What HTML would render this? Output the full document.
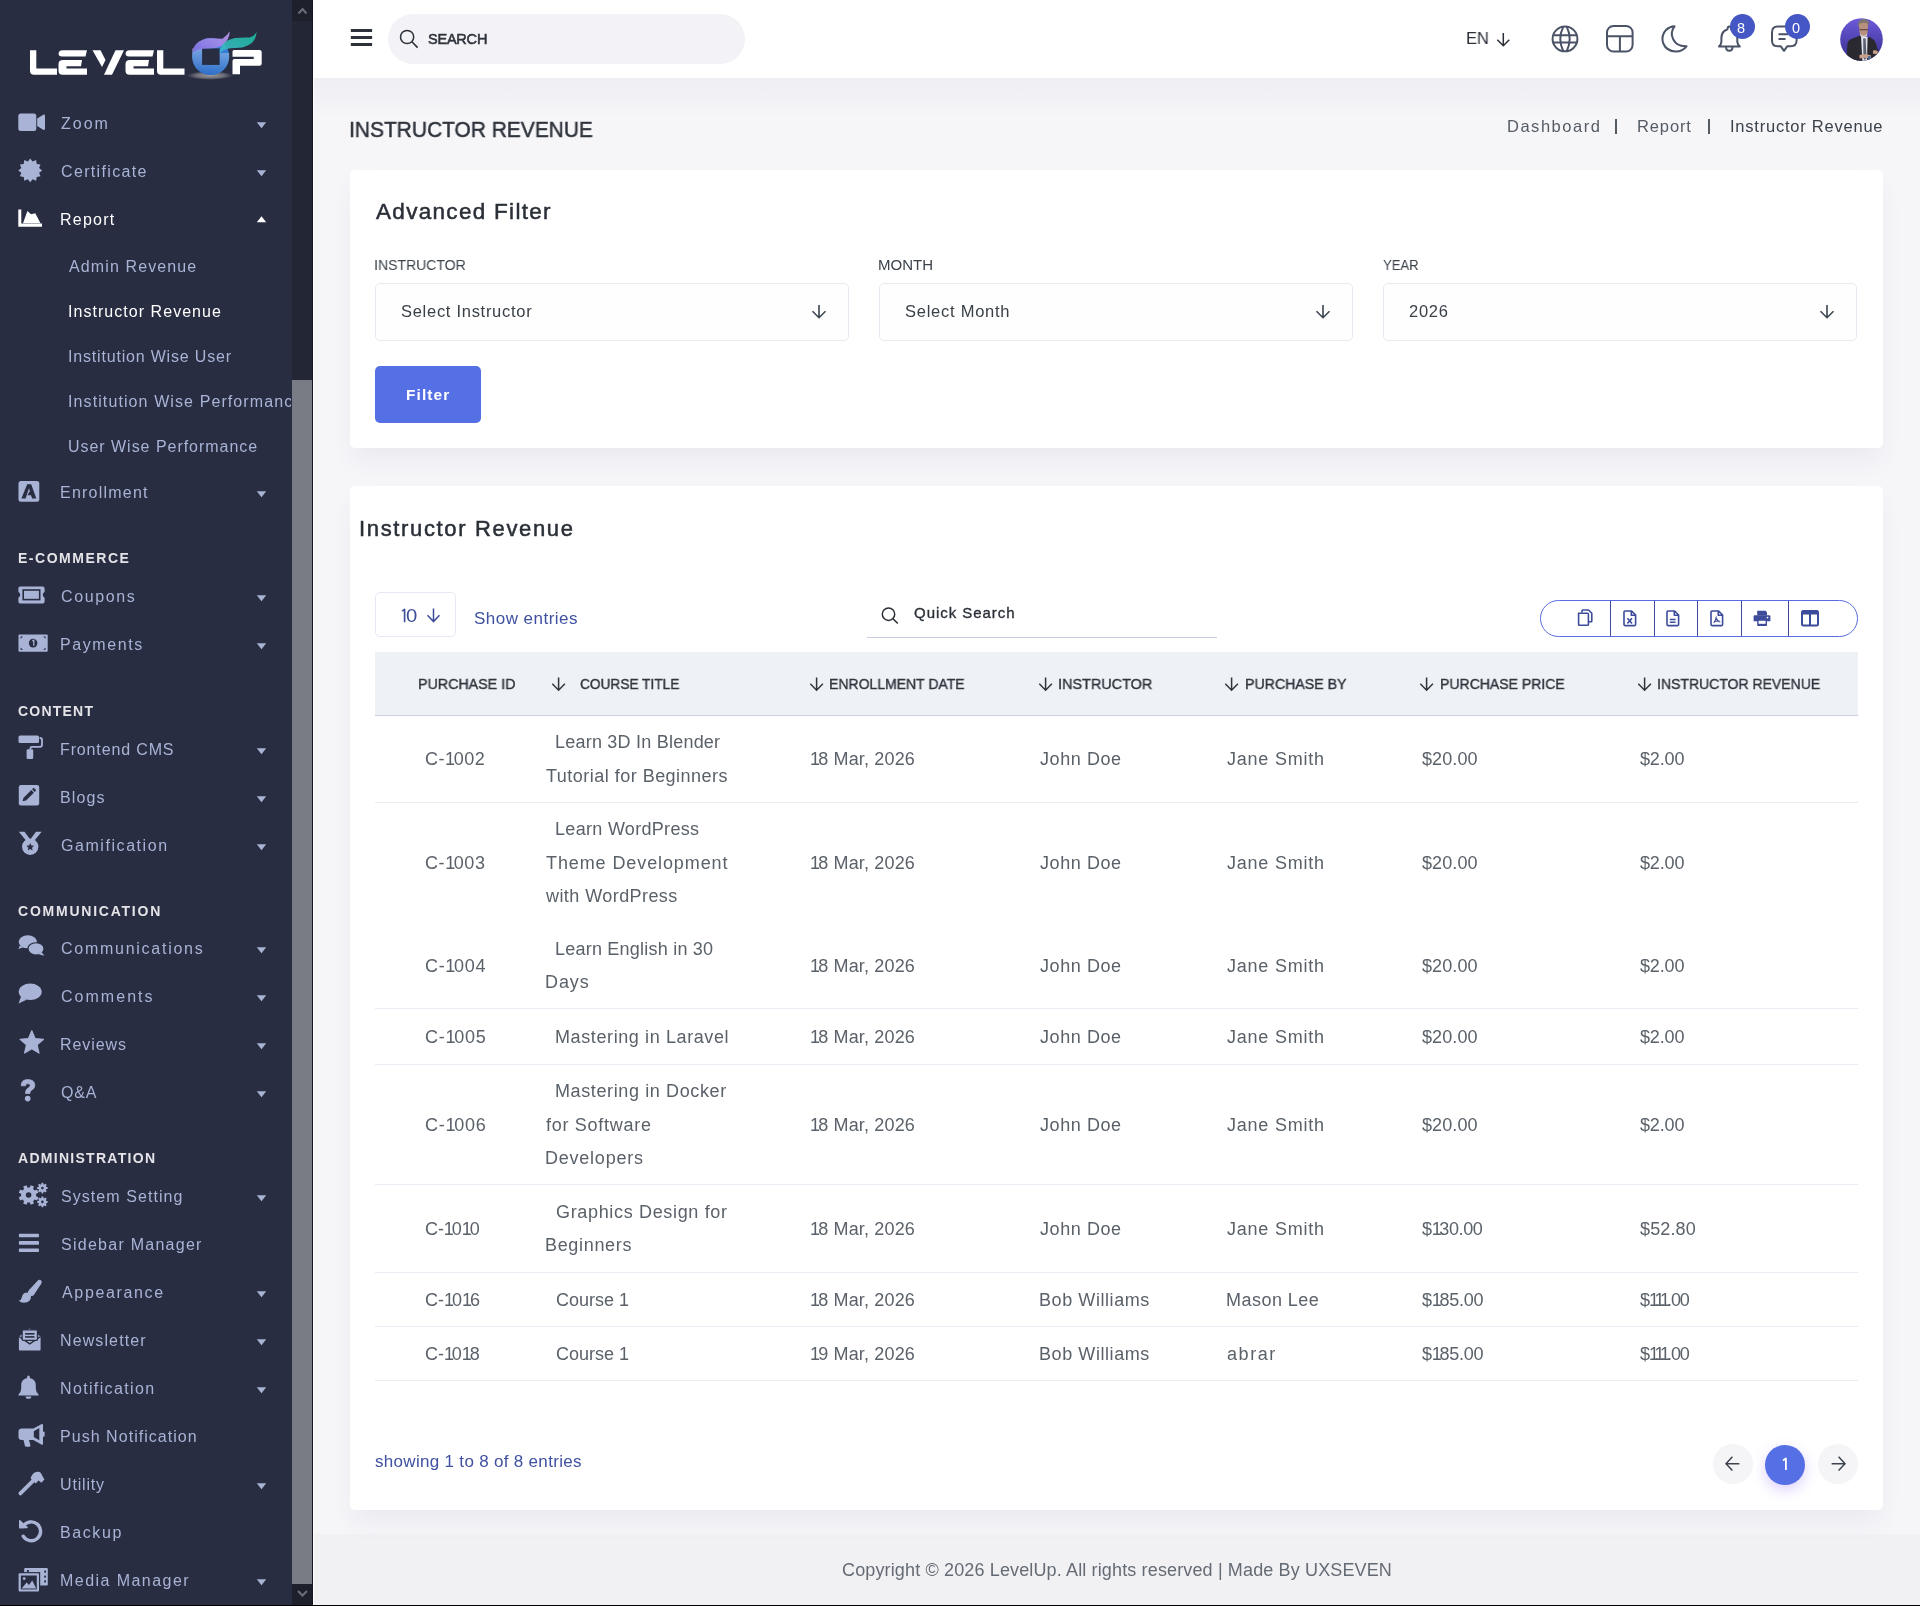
<!DOCTYPE html><html><head><meta charset="utf-8"><style>
html,body{margin:0;padding:0;width:1920px;height:1606px;overflow:hidden;background:#f6f6f9}
body{position:relative;font-family:"Liberation Sans",sans-serif}
.a{position:absolute}
.t{position:absolute;white-space:nowrap;will-change:transform}
.card{background:#fff;border-radius:5px;box-shadow:0 14px 24px -4px rgba(80,80,130,0.08)}
svg{overflow:visible}
</style></head><body>
<div class="a" style="left:0;top:0;width:292px;height:1606px;background:#292d41"></div>
<div class="a" style="left:292px;top:0;width:21px;height:1606px;background:#232634"></div>
<div class="a" style="left:292px;top:0;width:21px;height:21px;background:#1e202b"></div>
<div class="a" style="left:292px;top:1584px;width:21px;height:21px;background:#1e202b"></div>
<div class="a" style="left:292px;top:380px;width:21px;height:1204px;background:#7a7c85"></div>
<div class="a" style="left:312px;top:0;width:1px;height:1606px;background:#141722"></div>
<svg class="a" style="left:292px;top:0" width="21" height="21"><path d="M6.5 13.5 L10.5 9 L14.5 13.5" stroke="#6b6e78" stroke-width="2" fill="none"/></svg>
<svg class="a" style="left:292px;top:1584px" width="21" height="21"><path d="M6 7 L10.5 11.5 L15 7" stroke="#6b6e78" stroke-width="2" fill="none"/></svg>
<div class="a" style="left:313px;top:0;width:1px;height:1606px;background:#ffffff"></div>
<div class="a" style="left:314px;top:78px;width:1606px;height:1528px;background:#f6f6f9"></div>
<div class="a" style="left:314px;top:78px;width:1606px;height:40px;background:linear-gradient(#eeeef3,#f6f6f9)"></div>
<div class="a" style="left:314px;top:0;width:1606px;height:78px;background:#fff"></div>
<div class="a" style="left:388px;top:14px;width:357px;height:50px;border-radius:25px;background:#f2f2f7"></div>
<div class="a" style="left:314px;top:1534px;width:1606px;height:72px;background:#f1f1f4"></div>
<div class="a card" style="left:350px;top:170px;width:1533px;height:278px"></div>
<div class="a card" style="left:350px;top:486px;width:1533px;height:1024px"></div>
<div class="a" style="left:0;top:1605px;width:1920px;height:1px;background:#000"></div>
<svg class="a" style="left:0;top:0" width="292" height="90">
<defs>
<linearGradient id="gU" x1="0" y1="0" x2="1" y2="1"><stop offset="0" stop-color="#2f6fd0"/><stop offset="1" stop-color="#3a86d8"/></linearGradient>
<linearGradient id="gP" x1="0" y1="1" x2="1" y2="0"><stop offset="0" stop-color="#7a6ee0"/><stop offset="1" stop-color="#c29ef0"/></linearGradient>
<linearGradient id="gT" x1="0" y1="1" x2="1" y2="0"><stop offset="0" stop-color="#3fb8c8"/><stop offset="1" stop-color="#19b89a"/></linearGradient>
<linearGradient id="gU2" x1="0" y1="0" x2="0" y2="1"><stop offset="0" stop-color="#ffffff"/><stop offset="1" stop-color="#1a4fb0"/></linearGradient><radialGradient id="gS"><stop offset="0" stop-color="#a09a96" stop-opacity="1"/><stop offset="0.6" stop-color="#80808a" stop-opacity="0.8"/><stop offset="1" stop-color="#6a6c78" stop-opacity="0"/></radialGradient>
</defs>
<ellipse cx="210" cy="75.5" rx="23.5" ry="4.4" fill="url(#gS)"/>
<path d="M30 50.2 H36.3 V68.5 H57 V74.8 H34 Q30 74.8 30 70.8 Z" fill="#ffffff"/>
<path d="M62.5 50.2 H87 L85.5 56.5 H62 Q58.4 56.5 58.6 53.5 Q59 50.2 62.5 50.2 Z" fill="#ffffff"/>
<path d="M63 60 H82 L81 66.3 H66.5 V68.5 H87 V74.8 H62.5 Q58.5 74.8 58.5 70.8 V64 Q58.5 60 63 60 Z" fill="#ffffff"/>
<path d="M92.5 50.2 H100.5 L105.5 60 L102 67 Z" fill="#ffffff"/>
<path d="M115.5 50.2 H124 L112 74.8 H104 Z" fill="#ffffff"/>
<path d="M129.5 50.2 H154 L152.5 56.5 H129 Q125.4 56.5 125.6 53.5 Q126 50.2 129.5 50.2 Z" fill="#ffffff"/>
<path d="M130 60 H149 L148 66.3 H133.5 V68.5 H154 V74.8 H129.5 Q125.5 74.8 125.5 70.8 V64 Q125.5 60 130 60 Z" fill="#ffffff"/>
<path d="M157 50.2 H163.3 V68.5 H184.5 V74.8 H161 Q157 74.8 157 70.8 Z" fill="#ffffff"/>
<path d="M234 50 H259.5 Q261.7 50 261.7 52.2 V63.5 Q261.7 65.7 259.5 65.7 H240 V74.25 H232.5 V61 Q232.5 59 234.5 59 H253.75 V56.75 H232.5 V51.5 Q232.5 50 234 50 Z" fill="#ffffff"/>
<circle cx="210.65" cy="56.55" r="18.55" fill="url(#gU)"/>
<path d="M192.1 56.5 A18.55 18.55 0 0 0 229.2 56.5 L229.2 53 L219.6 53 V64.9 H202.1 V48.4 H192.1 Z" fill="url(#gU2)" opacity="0.35"/>
<rect x="202.1" y="48.4" width="17.5" height="16.5" fill="#292d41"/>
<path d="M192.2 53 Q193.5 41 208 38.3 Q216 37.8 222.5 38.8 Q227 36 229.8 31.3 Q229.5 40 222.5 45.5 Q218 48.4 208 48.4 Q197 48.6 192.2 53 Z" fill="url(#gP)" opacity="0.92"/>
<path d="M219.6 53 Q220.5 41 235 38 Q243 37.2 249.6 37.6 Q254.5 36 256.7 31.75 Q256 42 247.5 45.5 Q243 48 235 48 Q224.6 48 219.6 53 Z" fill="url(#gT)" opacity="0.92"/>
</svg>
<svg class="a" style="left:18px;top:113px" width="28" height="19"><rect x="0.3" y="0.5" width="18" height="17.5" rx="2.5" fill="#a8b3d5"/><path d="M19.2 5.5 L25.2 1.8 Q27 1 27 3 V15.5 Q27 17.5 25.2 16.7 L19.2 13 Z" fill="#a8b3d5"/></svg>
<svg class="a" style="left:18px;top:158px" width="25" height="25"><polygon points="12.20,0.50 14.58,3.51 18.15,2.09 18.71,5.89 22.51,6.45 21.09,10.02 24.10,12.40 21.09,14.78 22.51,18.35 18.71,18.91 18.15,22.71 14.58,21.29 12.20,24.30 9.82,21.29 6.25,22.71 5.69,18.91 1.89,18.35 3.31,14.78 0.30,12.40 3.31,10.02 1.89,6.45 5.69,5.89 6.25,2.09 9.82,3.51" fill="#a8b3d5"/></svg>
<svg class="a" style="left:18px;top:209px" width="25" height="18"><path d="M0.3 0.4 H3.3 V14.5 H24 V17.8 H0.3 Z" fill="#fff"/><path d="M5 14.3 L9.4 2.1 L13 5.2 L17.3 4.3 L22.5 14.3 Z" fill="#fff"/></svg>
<svg class="a" style="left:18px;top:481px" width="22" height="21"><rect x="0.5" y="0" width="20.8" height="20.8" rx="2.5" fill="#a8b3d5"/><path d="M3.4 17.5 L9.2 3.3 H13.2 L18.3 17.5 H14.1 L13 14.3 H9.6 L11.3 10.8 H12 L11 7.3 L7.6 17.5 Z" fill="#292d41"/></svg>
<svg class="a" style="left:18px;top:586px" width="28" height="18"><path d="M2 0.4 H24.6 Q26.6 0.4 26.6 2.4 V6 Q24.8 6.4 24.8 8.8 Q24.8 11.2 26.6 11.6 V15.5 Q26.6 17.5 24.6 17.5 H2 Q0.4 17.5 0.4 15.5 V11.6 Q2.2 11.2 2.2 8.8 Q2.2 6.4 0.4 6 V2.4 Q0.4 0.4 2 0.4 Z" fill="#a8b3d5"/><rect x="5.2" y="4" width="16.5" height="9.6" fill="none" stroke="#292d41" stroke-width="1.6"/></svg>
<svg class="a" style="left:18px;top:634px" width="30" height="18"><rect x="0.5" y="0.4" width="29.2" height="17.4" rx="1" fill="#a8b3d5"/><circle cx="15.1" cy="9.1" r="4.3" fill="#292d41"/><path d="M14.3 6.9 L15.8 6.2 V11.8" stroke="#a8b3d5" stroke-width="1.3" fill="none"/><path d="M2.6 2.4 L5 2.4 L2.6 4.8 Z M27.6 2.4 L25.2 2.4 L27.6 4.8 Z M2.6 15.8 L5 15.8 L2.6 13.4 Z M27.6 15.8 L25.2 15.8 L27.6 13.4 Z" fill="#292d41"/></svg>
<svg class="a" style="left:18px;top:735px" width="25" height="25"><rect x="0.5" y="0.4" width="20.5" height="7.6" rx="1.6" fill="#a8b3d5"/><path d="M21.6 3 H22 Q24 3 24 5 V9.8 Q24 11.8 22 11.8 H14 Q12.4 11.8 12.4 13.4 V14.5" stroke="#a8b3d5" stroke-width="1.8" fill="none"/><rect x="8.6" y="14.3" width="6.6" height="9.7" rx="1.2" fill="#a8b3d5"/></svg>
<svg class="a" style="left:18px;top:785px" width="22" height="21"><rect x="0.8" y="0" width="20.4" height="20.5" rx="2.2" fill="#a8b3d5"/><path d="M4.6 16.2 L5.4 13 L13.3 5.1 L15.9 7.7 L8 15.6 Z M14.1 4.3 L15.1 3.3 Q15.7 2.7 16.3 3.3 L17.7 4.7 Q18.3 5.3 17.7 5.9 L16.7 6.9 Z" fill="#292d41"/></svg>
<svg class="a" style="left:18px;top:831px" width="25" height="25"><path d="M0.8 0.8 H6.5 L11.5 7.5 L9 10.8 Z M23.7 0.8 H18 L13 7.5 L15.5 10.8 Z" fill="#a8b3d5"/><circle cx="12.2" cy="15.7" r="8.2" fill="#a8b3d5"/><polygon points="12.20,12.00 13.32,14.56 16.10,14.83 14.01,16.69 14.61,19.42 12.20,18.00 9.79,19.42 10.39,16.69 8.30,14.83 11.08,14.56" fill="#292d41"/></svg>
<svg class="a" style="left:18px;top:935px" width="28" height="22"><ellipse cx="9.8" cy="6.8" rx="9.2" ry="6.5" fill="#a8b3d5"/><path d="M1.8 10.5 L0.4 14 L5.5 12.3 Z" fill="#a8b3d5"/><ellipse cx="17.8" cy="13.2" rx="8.4" ry="6" fill="#292d41"/><ellipse cx="18" cy="13.8" rx="7.4" ry="5.6" fill="#a8b3d5"/><path d="M23.5 17 L26.4 20.8 L20.5 19.3 Z" fill="#a8b3d5"/></svg>
<svg class="a" style="left:18px;top:983px" width="25" height="22"><ellipse cx="12.2" cy="8.8" rx="11.5" ry="8.3" fill="#a8b3d5"/><path d="M3 13.5 L0.6 20.5 L8.5 16.8 Z" fill="#a8b3d5"/></svg>
<svg class="a" style="left:18px;top:1029px" width="27" height="26"><polygon points="13.80,1.80 17.09,9.57 25.50,10.30 19.13,15.83 21.03,24.05 13.80,19.70 6.57,24.05 8.47,15.83 2.10,10.30 10.51,9.57" fill="#a8b3d5" stroke="#a8b3d5" stroke-width="1.2" stroke-linejoin="round"/></svg>
<svg class="a" style="left:18px;top:1078px" width="20" height="25"><path d="M3.2 7.8 Q3.2 1.6 9.8 1.6 Q16.8 1.6 16.8 7.6 Q16.8 10.5 13.6 12.3 Q11.9 13.3 11.9 15 V15.5 H7.5 V14.5 Q7.5 11.4 10.4 9.8 Q12.3 8.8 12.3 7.6 Q12.3 5.6 9.8 5.6 Q7.5 5.6 7.5 7.8 Z" fill="#a8b3d5" stroke="#a8b3d5" stroke-width="0.8"/><circle cx="9.7" cy="20.6" r="2.8" fill="#a8b3d5"/></svg>
<svg class="a" style="left:18px;top:1183px" width="32" height="26"><circle cx="10.6" cy="12" r="7.6" fill="#a8b3d5"/><rect x="8.799999999999999" y="2.0999999999999996" width="3.6" height="9.9" rx="0.6" fill="#a8b3d5" transform="rotate(22.5 10.6 12)"/><rect x="8.799999999999999" y="2.0999999999999996" width="3.6" height="9.9" rx="0.6" fill="#a8b3d5" transform="rotate(67.5 10.6 12)"/><rect x="8.799999999999999" y="2.0999999999999996" width="3.6" height="9.9" rx="0.6" fill="#a8b3d5" transform="rotate(112.5 10.6 12)"/><rect x="8.799999999999999" y="2.0999999999999996" width="3.6" height="9.9" rx="0.6" fill="#a8b3d5" transform="rotate(157.5 10.6 12)"/><rect x="8.799999999999999" y="2.0999999999999996" width="3.6" height="9.9" rx="0.6" fill="#a8b3d5" transform="rotate(202.5 10.6 12)"/><rect x="8.799999999999999" y="2.0999999999999996" width="3.6" height="9.9" rx="0.6" fill="#a8b3d5" transform="rotate(247.5 10.6 12)"/><rect x="8.799999999999999" y="2.0999999999999996" width="3.6" height="9.9" rx="0.6" fill="#a8b3d5" transform="rotate(292.5 10.6 12)"/><rect x="8.799999999999999" y="2.0999999999999996" width="3.6" height="9.9" rx="0.6" fill="#a8b3d5" transform="rotate(337.5 10.6 12)"/><circle cx="10.6" cy="12" r="2.8" fill="#292d41"/><circle cx="24.4" cy="5.1" r="3.9" fill="#a8b3d5"/><rect x="23.4" y="-0.20000000000000018" width="2.0" height="5.3" rx="0.6" fill="#a8b3d5" transform="rotate(0.0 24.4 5.1)"/><rect x="23.4" y="-0.20000000000000018" width="2.0" height="5.3" rx="0.6" fill="#a8b3d5" transform="rotate(45.0 24.4 5.1)"/><rect x="23.4" y="-0.20000000000000018" width="2.0" height="5.3" rx="0.6" fill="#a8b3d5" transform="rotate(90.0 24.4 5.1)"/><rect x="23.4" y="-0.20000000000000018" width="2.0" height="5.3" rx="0.6" fill="#a8b3d5" transform="rotate(135.0 24.4 5.1)"/><rect x="23.4" y="-0.20000000000000018" width="2.0" height="5.3" rx="0.6" fill="#a8b3d5" transform="rotate(180.0 24.4 5.1)"/><rect x="23.4" y="-0.20000000000000018" width="2.0" height="5.3" rx="0.6" fill="#a8b3d5" transform="rotate(225.0 24.4 5.1)"/><rect x="23.4" y="-0.20000000000000018" width="2.0" height="5.3" rx="0.6" fill="#a8b3d5" transform="rotate(270.0 24.4 5.1)"/><rect x="23.4" y="-0.20000000000000018" width="2.0" height="5.3" rx="0.6" fill="#a8b3d5" transform="rotate(315.0 24.4 5.1)"/><circle cx="24.4" cy="5.1" r="1.3" fill="#292d41"/><circle cx="24.4" cy="18.9" r="3.9" fill="#a8b3d5"/><rect x="23.4" y="13.599999999999998" width="2.0" height="5.3" rx="0.6" fill="#a8b3d5" transform="rotate(0.0 24.4 18.9)"/><rect x="23.4" y="13.599999999999998" width="2.0" height="5.3" rx="0.6" fill="#a8b3d5" transform="rotate(45.0 24.4 18.9)"/><rect x="23.4" y="13.599999999999998" width="2.0" height="5.3" rx="0.6" fill="#a8b3d5" transform="rotate(90.0 24.4 18.9)"/><rect x="23.4" y="13.599999999999998" width="2.0" height="5.3" rx="0.6" fill="#a8b3d5" transform="rotate(135.0 24.4 18.9)"/><rect x="23.4" y="13.599999999999998" width="2.0" height="5.3" rx="0.6" fill="#a8b3d5" transform="rotate(180.0 24.4 18.9)"/><rect x="23.4" y="13.599999999999998" width="2.0" height="5.3" rx="0.6" fill="#a8b3d5" transform="rotate(225.0 24.4 18.9)"/><rect x="23.4" y="13.599999999999998" width="2.0" height="5.3" rx="0.6" fill="#a8b3d5" transform="rotate(270.0 24.4 18.9)"/><rect x="23.4" y="13.599999999999998" width="2.0" height="5.3" rx="0.6" fill="#a8b3d5" transform="rotate(315.0 24.4 18.9)"/><circle cx="24.4" cy="18.9" r="1.3" fill="#292d41"/></svg>
<svg class="a" style="left:18px;top:1233px" width="22" height="20"><rect x="0.9" y="0.8" width="20.1" height="3.5" rx="0.8" fill="#a8b3d5"/><rect x="0.9" y="8" width="20.1" height="3.7" rx="0.8" fill="#a8b3d5"/><rect x="0.9" y="15.6" width="20.1" height="3.5" rx="0.8" fill="#a8b3d5"/></svg>
<svg class="a" style="left:18px;top:1279px" width="25" height="25"><path d="M22.6 1 Q24.6 2.4 23.4 4.6 L16 15.8 Q14.4 17.8 12.2 16.4 L10.6 15 Q9 13.4 10.6 11.6 L19.6 1.8 Q21 0.2 22.6 1 Z" fill="#a8b3d5"/><path d="M8.6 13.6 Q12.2 14.2 13 17.6 Q13 23.6 6 23.8 Q2.4 23.8 0.8 21.6 Q3.4 21.2 3.8 18.6 Q4.4 14 8.6 13.6 Z" fill="#a8b3d5"/></svg>
<svg class="a" style="left:18px;top:1327px" width="25" height="25"><path d="M0.9 9.5 L11.5 1.5 L22.6 9.5 V22.5 Q22.6 23.6 21.5 23.6 H2 Q0.9 23.6 0.9 22.5 Z" fill="#a8b3d5"/><path d="M0.9 9.5 L11.8 16.8 L22.6 9.5" fill="none" stroke="#292d41" stroke-width="1.4"/><rect x="4.1" y="2.8" width="15.4" height="10.5" rx="1" fill="#a8b3d5" stroke="#292d41" stroke-width="1.3"/><rect x="7.1" y="6" width="9.4" height="1.6" fill="#292d41"/><rect x="7.1" y="9.1" width="9.4" height="1.6" fill="#292d41"/></svg>
<svg class="a" style="left:18px;top:1375px" width="22" height="25"><path d="M10.4 0.5 Q11.8 0.5 11.8 2 V3 Q17.8 4.1 17.8 10.5 V13.8 Q17.8 16.6 20.6 19.4 V20.5 H0.5 V19.4 Q3.2 16.6 3.2 13.8 V10.5 Q3.2 4.1 9.1 3 V2 Q9.1 0.5 10.4 0.5 Z" fill="#a8b3d5"/><path d="M7.6 21.5 H13.3 Q13.3 23.8 10.4 23.8 Q7.6 23.8 7.6 21.5 Z" fill="#a8b3d5"/></svg>
<svg class="a" style="left:18px;top:1423px" width="28" height="25"><path d="M23.8 1 Q25 0.6 25 2 V20.8 Q25 22.2 23.8 21.7 L15.4 17 H11 L12.4 22.3 Q12.7 23.7 11.3 23.7 H8.2 Q7.2 23.7 6.9 22.7 L5.5 17 H3.8 Q0.5 17 0.5 13.8 V8.6 Q0.5 5.4 3.8 5.4 H15.4 Z M21.3 5 L15.8 8.3 V14 L21.3 17.3 Z" fill="#a8b3d5" fill-rule="evenodd"/><rect x="25" y="8.6" width="1.6" height="5.2" rx="0.7" fill="#a8b3d5"/></svg>
<svg class="a" style="left:18px;top:1471px" width="28" height="25"><path d="M12.6 7.4 Q14.5 1.2 19.5 0.8 Q22 0.6 23 2.2 L26.4 8.6 L23.4 11.8 L20.6 9.4 L17.6 12.4 Z" fill="#a8b3d5"/><path d="M2.4 22.4 L15 9.8" stroke="#a8b3d5" stroke-width="3.8" stroke-linecap="round"/></svg>
<svg class="a" style="left:18px;top:1519px" width="25" height="25"><path d="M5.2 7.4 A9.4 9.4 0 1 1 5.2 17.2" stroke="#a8b3d5" stroke-width="3.4" fill="none" stroke-linecap="round"/><path d="M1 1.8 Q1 0.4 2.3 1.3 L9.4 7.7 Q10.3 8.8 9 9.2 L2.2 9.6 Q1 9.6 1 8.4 Z" fill="#a8b3d5"/></svg>
<svg class="a" style="left:18px;top:1567px" width="31" height="26"><rect x="6.2" y="1" width="23.6" height="17.5" rx="1.2" fill="#a8b3d5"/><rect x="26.2" y="3.6" width="1.8" height="2" fill="#292d41"/><rect x="26.2" y="8.6" width="1.8" height="2" fill="#292d41"/><rect x="26.2" y="13.4" width="1.8" height="2" fill="#292d41"/><rect x="9" y="3" width="1.8" height="2" fill="#292d41"/><rect x="-0.6" y="5.1" width="22.8" height="20.7" fill="#292d41"/><rect x="0.6" y="6.3" width="20.4" height="18.3" rx="1" fill="#a8b3d5"/><rect x="2.8" y="8.5" width="16" height="13.9" fill="#292d41"/><path d="M3.6 21.6 L8.6 15.6 L11 18 L14.2 13.6 L18.2 21.6 Z" fill="#a8b3d5"/><circle cx="6.2" cy="11.6" r="1.4" fill="#a8b3d5"/></svg>
<svg class="a" style="left:350px;top:28px" width="24" height="20"><rect x="0.8" y="1" width="21.3" height="3" rx="0.5" fill="#2d3139"/><rect x="0.8" y="8" width="21.3" height="3" rx="0.5" fill="#2d3139"/><rect x="0.8" y="15" width="21.3" height="3" rx="0.5" fill="#2d3139"/></svg>
<svg class="a" style="left:398px;top:28px" width="22" height="22"><circle cx="9.1" cy="9" r="6.6" stroke="#2d3139" stroke-width="1.5" fill="none"/><path d="M13.9 13.8 L19.6 19.6" stroke="#2d3139" stroke-width="1.6"/></svg>
<svg class="a" style="left:1495px;top:31px" width="18" height="17"><path d="M8.3 2 V14.5 M2.3 8.7 L8.3 14.7 L14.3 8.7" stroke="#2b3038" stroke-width="1.5" fill="none"/></svg>
<svg class="a" style="left:1551px;top:25px" width="28" height="28"><g stroke="#4b5366" stroke-width="2" fill="none"><circle cx="14" cy="13.9" r="12.4"/><path d="M2.6 10.3 H25.4 M2.6 17.6 H25.4"/><path d="M12.3 1.6 Q6.3 13.9 12.3 26.2 M15.7 1.6 Q21.7 13.9 15.7 26.2"/></g></svg>
<svg class="a" style="left:1606px;top:25px" width="28" height="28"><g stroke="#4b5366" stroke-width="2" fill="none"><rect x="1" y="1" width="25.6" height="25.5" rx="6.5"/><path d="M1 11.2 H26.6 M13.9 11.2 V26.5"/></g></svg>
<svg class="a" style="left:1660px;top:24px" width="30" height="30"><path d="M14.5 2.3 Q9.8 8.5 13.3 15.5 Q17 22.8 26.6 22.2 Q22.6 27.8 15.5 27.6 Q6.5 27 3.3 19.5 Q0.6 11.5 6 6 Q9.5 2.6 14.5 2.3 Z" stroke="#4b5366" stroke-width="2" fill="none" stroke-linejoin="round"/></svg>
<svg class="a" style="left:1718px;top:24px" width="26" height="30"><g stroke="#4b5366" stroke-width="2" fill="none" stroke-linejoin="round"><path d="M9.5 5.2 Q9.5 2.5 11.3 2.5 Q13.1 2.5 13.1 5.2 Q19.3 7.3 19.3 14 V17.8 Q19.5 20.3 21.8 22.5 H1 Q3.3 20.3 3.4 17.8 V14 Q3.4 7.3 9.5 5.2 Z"/><path d="M8 22.8 Q8 26.8 11.3 26.8 Q14.6 26.8 14.6 22.8"/></g></svg>
<svg class="a" style="left:1771px;top:25px" width="28" height="28"><g stroke="#4b5366" stroke-width="2" fill="none" stroke-linejoin="round"><path d="M6.5 1.5 H19.5 Q25.6 1.5 25.6 7.5 V15.5 Q25.6 21.3 19.5 21.3 H16.2 L13 25.8 L9.8 21.3 H6.5 Q1 21.3 1 15.5 V7.5 Q1 1.5 6.5 1.5 Z"/><path d="M7.5 9.3 H17 M7.5 14 H14.5"/></g></svg>
<div class="a" style="left:1730.0px;top:13.9px;width:25px;height:25px;border-radius:50%;background:#4557c4"></div>
<div class="t" style="left:1737.35px;top:20px;font-size:14.5px;line-height:16px;color:#ffffff;letter-spacing:0.000px;">8</div>
<div class="a" style="left:1784.9px;top:13.9px;width:25px;height:25px;border-radius:50%;background:#4557c4"></div>
<div class="t" style="left:1792.32px;top:20px;font-size:14.5px;line-height:16px;color:#ffffff;letter-spacing:0.000px;">0</div>
<svg class="a" style="left:1840px;top:17.5px" width="43" height="43"><defs><linearGradient id="av" x1="0" y1="0" x2="0" y2="1"><stop offset="0" stop-color="#6d5ada"/><stop offset="1" stop-color="#352e8c"/></linearGradient><clipPath id="avc"><circle cx="21.5" cy="21.5" r="21.3"/></clipPath></defs>
<circle cx="21.5" cy="21.5" r="21.3" fill="url(#av)"/>
<g clip-path="url(#avc)">
<path d="M6.5 44 L7.5 25 Q8.5 21.5 13.5 20.2 L20 17.5 L24.5 25 L28.5 18.8 Q33.5 20.5 35.5 24.5 L40 38 L37 44 Z" fill="#2a2930"/>
<path d="M21 17.6 L24.6 19 L27.6 18.6 L27 44 L22.4 44 Z" fill="#dfe3ec"/>
<path d="M23.2 20.5 L25.6 20.2 L26.6 40 L24.8 42 L23.4 40 Z" fill="#5b6070"/>
<path d="M19 8 Q19 3.5 23.5 3.5 Q28 3.5 28 8.5 L27.6 14 Q26.8 19 23.5 19 Q20.2 19 19.5 14 Z" fill="#b9907e"/>
<path d="M17.8 9.5 Q16.8 1.5 23.5 1 Q30.2 1 29.5 8.8 Q28.8 5.6 26.5 5.1 Q23.5 4.3 20.6 5.3 Q18.6 6.2 17.8 9.5 Z" fill="#7d766e"/>
<path d="M19.8 15.2 Q23.5 20.5 27.4 15.2 L27 17.6 Q23.5 21 20.2 17.6 Z" fill="#d9d6d4"/>
<rect x="19.6" y="11" width="8.2" height="1.3" fill="#3a3130" opacity="0.7"/>
<path d="M19.5 37 Q25 35.5 31 37.5 L31 40.5 Q25 39 19.5 40.5 Z" fill="#c8a08c"/>
<path d="M33 32.5 Q36 31.5 38 33.5 L37 36.5 Q35 35.2 33 36 Z" fill="#c8a08c"/>
<rect x="28" y="38" width="2.5" height="3.5" fill="#4a6ea0"/>
</g></svg>
<svg class="a" style="left:1577px;top:609px" width="17" height="18"><g fill="none" stroke="#3c4b9a" stroke-width="1.6" stroke-linejoin="round"><path d="M5 3.5 V1.8 Q5 1 5.8 1 H11.5 L14.8 4.2 V12 Q14.8 12.8 14 12.8 H12"/><path d="M1.6 4.2 H10.5 Q11.4 4.2 11.4 5 V15.5 Q11.4 16.3 10.5 16.3 H2.4 Q1.6 16.3 1.6 15.5 Z"/></g></svg>
<svg class="a" style="left:1623px;top:610px" width="15" height="17"><g fill="none" stroke="#3c4b9a" stroke-width="1.6" stroke-linejoin="round"><path d="M2 1 H8.6 L12.6 5 V14.6 Q12.6 15.6 11.6 15.6 H2 Q1 15.6 1 14.6 V2 Q1 1 2 1 Z M8.3 1.2 V5.3 H12.4"/></g><path d="M4.4 8.2 L9 13.5 M9 8.2 L4.4 13.5" stroke="#3c4b9a" stroke-width="1.6"/></svg>
<svg class="a" style="left:1666px;top:610px" width="15" height="17"><g fill="none" stroke="#3c4b9a" stroke-width="1.6" stroke-linejoin="round"><path d="M2 1 H8.6 L12.6 5 V14.6 Q12.6 15.6 11.6 15.6 H2 Q1 15.6 1 14.6 V2 Q1 1 2 1 Z M8.3 1.2 V5.3 H12.4"/></g><path d="M3.8 9.5 H9.6 M3.8 12.3 H9.6" stroke="#3c4b9a" stroke-width="1.5"/></svg>
<svg class="a" style="left:1710px;top:610px" width="15" height="17"><g fill="none" stroke="#3c4b9a" stroke-width="1.6" stroke-linejoin="round"><path d="M2 1 H8.6 L12.6 5 V14.6 Q12.6 15.6 11.6 15.6 H2 Q1 15.6 1 14.6 V2 Q1 1 2 1 Z M8.3 1.2 V5.3 H12.4"/></g><path d="M6.4 6.5 Q6 9.5 3.7 13 M6.4 8.5 Q7.5 11.5 10.3 12.2 M4.5 11.5 Q7 10.8 9.5 11" stroke="#3c4b9a" stroke-width="1.1" fill="none"/></svg>
<svg class="a" style="left:1753px;top:610px" width="18" height="17"><path d="M4.2 0.8 H12.5 L14 2.3 V5.5 H4.2 Z" fill="#3c4b9a"/><path d="M1.8 5.2 H16.2 Q17.4 5.2 17.4 6.4 V11.2 H0.6 V6.4 Q0.6 5.2 1.8 5.2 Z" fill="#3c4b9a"/><rect x="4.2" y="9.8" width="9.8" height="6.2" rx="0.8" fill="#3c4b9a"/><rect x="5.6" y="10.8" width="7" height="3" fill="#fff"/><circle cx="14.5" cy="7.6" r="0.9" fill="#fff"/></svg>
<svg class="a" style="left:1801px;top:610px" width="18" height="16"><rect x="1" y="1" width="16" height="14.5" rx="1.2" fill="none" stroke="#3c4b9a" stroke-width="2"/><rect x="1" y="1" width="16" height="3.5" fill="#3c4b9a"/><path d="M9 4 V15" stroke="#3c4b9a" stroke-width="2"/></svg>
<div class="t" style="left:61.12px;top:115px;font-size:16px;line-height:17px;color:#a8b3d5;letter-spacing:1.987px;">Zoom</div>
<div class="t" style="left:60.80px;top:163px;font-size:16px;line-height:17px;color:#a8b3d5;letter-spacing:1.342px;">Certificate</div>
<div class="t" style="left:60.32px;top:211px;font-size:16px;line-height:17px;color:#ffffff;letter-spacing:1.252px;">Report</div>
<div class="t" style="left:69.25px;top:258px;font-size:16px;line-height:17px;color:#a8b3d5;letter-spacing:1.115px;">Admin Revenue</div>
<div class="t" style="left:67.81px;top:303px;font-size:16px;line-height:17px;color:#ffffff;letter-spacing:1.042px;">Instructor Revenue</div>
<div class="t" style="left:67.81px;top:348px;font-size:16px;line-height:17px;color:#a8b3d5;letter-spacing:0.814px;">Institution Wise User</div>
<div class="t" style="left:67.81px;top:393px;font-size:16px;line-height:17px;color:#a8b3d5;letter-spacing:1.100px;width:223px;overflow:hidden;">Institution Wise Performance</div>
<div class="t" style="left:68.05px;top:438px;font-size:16px;line-height:17px;color:#a8b3d5;letter-spacing:0.966px;">User Wise Performance</div>
<div class="t" style="left:60.32px;top:484px;font-size:16px;line-height:17px;color:#a8b3d5;letter-spacing:1.218px;">Enrollment</div>
<div class="t" style="left:60.80px;top:588px;font-size:16px;line-height:17px;color:#a8b3d5;letter-spacing:1.597px;">Coupons</div>
<div class="t" style="left:60.32px;top:636px;font-size:16px;line-height:17px;color:#a8b3d5;letter-spacing:1.589px;">Payments</div>
<div class="t" style="left:60.32px;top:741px;font-size:16px;line-height:17px;color:#a8b3d5;letter-spacing:0.864px;">Frontend CMS</div>
<div class="t" style="left:60.32px;top:789px;font-size:16px;line-height:17px;color:#a8b3d5;letter-spacing:1.110px;">Blogs</div>
<div class="t" style="left:60.80px;top:837px;font-size:16px;line-height:17px;color:#a8b3d5;letter-spacing:1.560px;">Gamification</div>
<div class="t" style="left:60.80px;top:940px;font-size:16px;line-height:17px;color:#a8b3d5;letter-spacing:1.735px;">Communications</div>
<div class="t" style="left:60.80px;top:988px;font-size:16px;line-height:17px;color:#a8b3d5;letter-spacing:2.029px;">Comments</div>
<div class="t" style="left:60.32px;top:1036px;font-size:16px;line-height:17px;color:#a8b3d5;letter-spacing:0.927px;">Reviews</div>
<div class="t" style="left:60.88px;top:1084px;font-size:16px;line-height:17px;color:#a8b3d5;letter-spacing:0.830px;">Q&amp;A</div>
<div class="t" style="left:60.88px;top:1188px;font-size:16px;line-height:17px;color:#a8b3d5;letter-spacing:1.058px;">System Setting</div>
<div class="t" style="left:60.88px;top:1236px;font-size:16px;line-height:17px;color:#a8b3d5;letter-spacing:1.260px;">Sidebar Manager</div>
<div class="t" style="left:61.60px;top:1284px;font-size:16px;line-height:17px;color:#a8b3d5;letter-spacing:1.653px;">Appearance</div>
<div class="t" style="left:60.32px;top:1332px;font-size:16px;line-height:17px;color:#a8b3d5;letter-spacing:1.111px;">Newsletter</div>
<div class="t" style="left:60.32px;top:1380px;font-size:16px;line-height:17px;color:#a8b3d5;letter-spacing:1.355px;">Notification</div>
<div class="t" style="left:60.32px;top:1428px;font-size:16px;line-height:17px;color:#a8b3d5;letter-spacing:1.040px;">Push Notification</div>
<div class="t" style="left:60.40px;top:1476px;font-size:16px;line-height:17px;color:#a8b3d5;letter-spacing:0.830px;">Utility</div>
<div class="t" style="left:60.32px;top:1524px;font-size:16px;line-height:17px;color:#a8b3d5;letter-spacing:1.592px;">Backup</div>
<div class="t" style="left:60.32px;top:1572px;font-size:16px;line-height:17px;color:#a8b3d5;letter-spacing:1.450px;">Media Manager</div>
<svg class="a" style="left:256px;top:122px" width="11" height="7"><path d="M0.8 0.2 H10.2 L5.5 6.2 Z" fill="#a8b3d5"/></svg>
<svg class="a" style="left:256px;top:170px" width="11" height="7"><path d="M0.8 0.2 H10.2 L5.5 6.2 Z" fill="#a8b3d5"/></svg>
<svg class="a" style="left:256px;top:491px" width="11" height="7"><path d="M0.8 0.2 H10.2 L5.5 6.2 Z" fill="#a8b3d5"/></svg>
<svg class="a" style="left:256px;top:595px" width="11" height="7"><path d="M0.8 0.2 H10.2 L5.5 6.2 Z" fill="#a8b3d5"/></svg>
<svg class="a" style="left:256px;top:643px" width="11" height="7"><path d="M0.8 0.2 H10.2 L5.5 6.2 Z" fill="#a8b3d5"/></svg>
<svg class="a" style="left:256px;top:748px" width="11" height="7"><path d="M0.8 0.2 H10.2 L5.5 6.2 Z" fill="#a8b3d5"/></svg>
<svg class="a" style="left:256px;top:796px" width="11" height="7"><path d="M0.8 0.2 H10.2 L5.5 6.2 Z" fill="#a8b3d5"/></svg>
<svg class="a" style="left:256px;top:844px" width="11" height="7"><path d="M0.8 0.2 H10.2 L5.5 6.2 Z" fill="#a8b3d5"/></svg>
<svg class="a" style="left:256px;top:947px" width="11" height="7"><path d="M0.8 0.2 H10.2 L5.5 6.2 Z" fill="#a8b3d5"/></svg>
<svg class="a" style="left:256px;top:995px" width="11" height="7"><path d="M0.8 0.2 H10.2 L5.5 6.2 Z" fill="#a8b3d5"/></svg>
<svg class="a" style="left:256px;top:1043px" width="11" height="7"><path d="M0.8 0.2 H10.2 L5.5 6.2 Z" fill="#a8b3d5"/></svg>
<svg class="a" style="left:256px;top:1091px" width="11" height="7"><path d="M0.8 0.2 H10.2 L5.5 6.2 Z" fill="#a8b3d5"/></svg>
<svg class="a" style="left:256px;top:1195px" width="11" height="7"><path d="M0.8 0.2 H10.2 L5.5 6.2 Z" fill="#a8b3d5"/></svg>
<svg class="a" style="left:256px;top:1291px" width="11" height="7"><path d="M0.8 0.2 H10.2 L5.5 6.2 Z" fill="#a8b3d5"/></svg>
<svg class="a" style="left:256px;top:1339px" width="11" height="7"><path d="M0.8 0.2 H10.2 L5.5 6.2 Z" fill="#a8b3d5"/></svg>
<svg class="a" style="left:256px;top:1387px" width="11" height="7"><path d="M0.8 0.2 H10.2 L5.5 6.2 Z" fill="#a8b3d5"/></svg>
<svg class="a" style="left:256px;top:1483px" width="11" height="7"><path d="M0.8 0.2 H10.2 L5.5 6.2 Z" fill="#a8b3d5"/></svg>
<svg class="a" style="left:256px;top:1579px" width="11" height="7"><path d="M0.8 0.2 H10.2 L5.5 6.2 Z" fill="#a8b3d5"/></svg>
<svg class="a" style="left:256px;top:216px" width="11" height="7"><path d="M0.8 6.2 H10.2 L5.5 0.2 Z" fill="#fff"/></svg>
<div class="t" style="left:17.89px;top:550px;font-size:14px;line-height:16px;color:#e4e4e8;letter-spacing:1.519px;font-weight:bold;">E-COMMERCE</div>
<div class="t" style="left:18.24px;top:703px;font-size:14px;line-height:16px;color:#e4e4e8;letter-spacing:1.213px;font-weight:bold;">CONTENT</div>
<div class="t" style="left:18.24px;top:903px;font-size:14px;line-height:16px;color:#e4e4e8;letter-spacing:1.770px;font-weight:bold;">COMMUNICATION</div>
<div class="t" style="left:18.45px;top:1150px;font-size:14px;line-height:16px;color:#e4e4e8;letter-spacing:1.285px;font-weight:bold;">ADMINISTRATION</div>
<div class="t" style="left:427.65px;top:31px;font-size:14.5px;line-height:16px;color:#2f333b;letter-spacing:-0.216px;-webkit-text-stroke:0.55px #2f333b;">SEARCH</div>
<div class="t" style="left:1465.54px;top:29px;font-size:17px;line-height:19px;color:#2b3038;letter-spacing:0.000px;transform:scaleX(0.9700);transform-origin:1.36px 0;">EN</div>
<div class="t" style="left:348.92px;top:117px;font-size:22px;line-height:25px;color:#30353d;letter-spacing:0.000px;-webkit-text-stroke:0.5px #30353d;transform:scaleX(0.9513);transform-origin:1.98px 0;">INSTRUCTOR REVENUE</div>
<div class="t" style="left:1506.78px;top:117px;font-size:16.5px;line-height:18px;color:#555b64;letter-spacing:1.513px;">Dashboard</div>
<div class="a" style="left:1615px;top:119px;width:2px;height:15px;background:#555b63"></div>
<div class="t" style="left:1637.18px;top:117px;font-size:16.5px;line-height:18px;color:#555b64;letter-spacing:0.880px;">Report</div>
<div class="a" style="left:1708px;top:119px;width:2px;height:15px;background:#555b63"></div>
<div class="t" style="left:1730.12px;top:117px;font-size:16.5px;line-height:18px;color:#3b4149;letter-spacing:0.771px;">Instructor Revenue</div>
<div class="t" style="left:376.40px;top:199px;font-size:22.5px;line-height:25px;color:#2a2f37;letter-spacing:1.305px;-webkit-text-stroke:0.5px #2a2f37;">Advanced Filter</div>
<div class="t" style="left:374.35px;top:256px;font-size:15px;line-height:17px;color:#3c424b;letter-spacing:0.000px;transform:scaleX(0.9344);transform-origin:1.35px 0;">INSTRUCTOR</div>
<div class="t" style="left:878.40px;top:256px;font-size:15px;line-height:17px;color:#3c424b;letter-spacing:0.031px;">MONTH</div>
<div class="t" style="left:1383.22px;top:256px;font-size:15px;line-height:17px;color:#3c424b;letter-spacing:0.000px;transform:scaleX(0.8704);transform-origin:0.38px 0;">YEAR</div>
<div class="a" style="left:375px;top:283px;width:472px;height:56px;border:1px solid #e9eaf1;border-radius:5px;background:#fefefe"></div>
<div class="t" style="left:400.96px;top:302px;font-size:16.5px;line-height:18px;color:#3a4048;letter-spacing:0.716px;">Select Instructor</div>
<svg class="a" style="left:810.6px;top:302px" width="16" height="18"><path d="M8 3 V15.5 M1.5 9.3 L8 15.7 L14.5 9.3" stroke="#3d4550" stroke-width="1.6" fill="none"/></svg>
<div class="a" style="left:879px;top:283px;width:472px;height:56px;border:1px solid #e9eaf1;border-radius:5px;background:#fefefe"></div>
<div class="t" style="left:904.96px;top:302px;font-size:16.5px;line-height:18px;color:#3a4048;letter-spacing:0.749px;">Select Month</div>
<svg class="a" style="left:1314.6px;top:302px" width="16" height="18"><path d="M8 3 V15.5 M1.5 9.3 L8 15.7 L14.5 9.3" stroke="#3d4550" stroke-width="1.6" fill="none"/></svg>
<div class="a" style="left:1383px;top:283px;width:472px;height:56px;border:1px solid #e9eaf1;border-radius:5px;background:#fefefe"></div>
<div class="t" style="left:1408.88px;top:302px;font-size:16.5px;line-height:18px;color:#3a4048;letter-spacing:0.758px;">2026</div>
<svg class="a" style="left:1818.6px;top:302px" width="16" height="18"><path d="M8 3 V15.5 M1.5 9.3 L8 15.7 L14.5 9.3" stroke="#3d4550" stroke-width="1.6" fill="none"/></svg>
<div class="a" style="left:375px;top:366px;width:106px;height:57px;border-radius:5px;background:#5570e4"></div>
<div class="t" style="left:405.59px;top:386px;font-size:15.5px;line-height:17px;color:#ffffff;letter-spacing:1.069px;font-weight:bold;">Filter</div>
<div class="t" style="left:359.22px;top:516px;font-size:22px;line-height:25px;color:#2a2f37;letter-spacing:1.651px;-webkit-text-stroke:0.5px #2a2f37;">Instructor Revenue</div>
<div class="a" style="left:375px;top:592px;width:79px;height:43px;border:1px solid #e6e9f3;border-radius:5px"></div>
<svg class="a" style="left:400px;top:607px" width="8" height="17"><path d="M2.2 4.2 L4.6 2.4 V15.2" stroke="#3c4d99" stroke-width="1.6" fill="none" stroke-linejoin="round"/></svg>
<div class="t" style="left:405.70px;top:606px;font-size:17.5px;line-height:20px;color:#3c4d99;letter-spacing:0.000px;transform:scaleX(1.16);transform-origin:0 0;">0</div>
<svg class="a" style="left:426px;top:607px" width="16" height="16"><path d="M7.5 1.5 V14.5 M1.5 8.3 L7.5 14.6 L13.5 8.3" stroke="#3c4d99" stroke-width="1.5" fill="none"/></svg>
<div class="t" style="left:474.44px;top:609px;font-size:17px;line-height:19px;color:#3f51a0;letter-spacing:0.473px;">Show entries</div>
<svg class="a" style="left:880px;top:606px" width="20" height="20"><circle cx="8.5" cy="8.2" r="6.2" stroke="#2b3038" stroke-width="1.5" fill="none"/><path d="M13 12.7 L17.8 17.5" stroke="#2b3038" stroke-width="1.6"/></svg>
<div class="t" style="left:913.53px;top:604px;font-size:15px;line-height:17px;color:#2b3038;letter-spacing:0.959px;-webkit-text-stroke:0.35px #2b3038;">Quick Search</div>
<div class="a" style="left:867px;top:637px;width:350px;height:1px;background:#c9cfe3"></div>
<div class="a" style="left:1540px;top:600px;width:316px;height:35px;border:1px solid #5a6de0;border-radius:19px"></div>
<div class="a" style="left:1610px;top:601px;width:1.3px;height:35px;background:#3d4b9a"></div>
<div class="a" style="left:1654px;top:601px;width:1.3px;height:35px;background:#3d4b9a"></div>
<div class="a" style="left:1697px;top:601px;width:1.3px;height:35px;background:#3d4b9a"></div>
<div class="a" style="left:1741px;top:601px;width:1.3px;height:35px;background:#3d4b9a"></div>
<div class="a" style="left:1788px;top:601px;width:1.3px;height:35px;background:#3d4b9a"></div>
<div class="a" style="left:375px;top:652px;width:1483px;height:63px;background:#eef1f6"></div>
<div class="a" style="left:375px;top:715px;width:1483px;height:1px;background:#cbd0e2"></div>
<div class="t" style="left:418.20px;top:675px;font-size:15px;line-height:17px;color:#30353d;letter-spacing:0.000px;-webkit-text-stroke:0.4px #30353d;transform:scaleX(0.9498);transform-origin:1.20px 0;">PURCHASE ID</div>
<svg class="a" style="left:550.7px;top:676px" width="16" height="16"><path d="M7.6 1.5 V14 M1.3 7.8 L7.6 14.2 L13.9 7.8" stroke="#30353d" stroke-width="1.5" fill="none"/></svg>
<div class="t" style="left:580.25px;top:675px;font-size:15px;line-height:17px;color:#30353d;letter-spacing:0.000px;-webkit-text-stroke:0.4px #30353d;transform:scaleX(0.9112);transform-origin:0.75px 0;">COURSE TITLE</div>
<svg class="a" style="left:808.7px;top:676px" width="16" height="16"><path d="M7.6 1.5 V14 M1.3 7.8 L7.6 14.2 L13.9 7.8" stroke="#30353d" stroke-width="1.5" fill="none"/></svg>
<div class="t" style="left:829.40px;top:675px;font-size:15px;line-height:17px;color:#30353d;letter-spacing:0.000px;-webkit-text-stroke:0.4px #30353d;transform:scaleX(0.9326);transform-origin:1.20px 0;">ENROLLMENT DATE</div>
<svg class="a" style="left:1037.75px;top:676px" width="16" height="16"><path d="M7.6 1.5 V14 M1.3 7.8 L7.6 14.2 L13.9 7.8" stroke="#30353d" stroke-width="1.5" fill="none"/></svg>
<div class="t" style="left:1057.65px;top:675px;font-size:15px;line-height:17px;color:#30353d;letter-spacing:0.000px;-webkit-text-stroke:0.4px #30353d;transform:scaleX(0.9609);transform-origin:1.35px 0;">INSTRUCTOR</div>
<svg class="a" style="left:1224.3px;top:676px" width="16" height="16"><path d="M7.6 1.5 V14 M1.3 7.8 L7.6 14.2 L13.9 7.8" stroke="#30353d" stroke-width="1.5" fill="none"/></svg>
<div class="t" style="left:1245.05px;top:675px;font-size:15px;line-height:17px;color:#30353d;letter-spacing:0.000px;-webkit-text-stroke:0.4px #30353d;transform:scaleX(0.9436);transform-origin:1.20px 0;">PURCHASE BY</div>
<svg class="a" style="left:1419px;top:676px" width="16" height="16"><path d="M7.6 1.5 V14 M1.3 7.8 L7.6 14.2 L13.9 7.8" stroke="#30353d" stroke-width="1.5" fill="none"/></svg>
<div class="t" style="left:1439.55px;top:675px;font-size:15px;line-height:17px;color:#30353d;letter-spacing:0.000px;-webkit-text-stroke:0.4px #30353d;transform:scaleX(0.9350);transform-origin:1.20px 0;">PURCHASE PRICE</div>
<svg class="a" style="left:1636.5px;top:676px" width="16" height="16"><path d="M7.6 1.5 V14 M1.3 7.8 L7.6 14.2 L13.9 7.8" stroke="#30353d" stroke-width="1.5" fill="none"/></svg>
<div class="t" style="left:1656.90px;top:675px;font-size:15px;line-height:17px;color:#30353d;letter-spacing:0.000px;-webkit-text-stroke:0.4px #30353d;transform:scaleX(0.9332);transform-origin:1.35px 0;">INSTRUCTOR REVENUE</div>
<div class="t" style="left:554.96px;top:732px;font-size:18px;line-height:20px;color:#5a6169;letter-spacing:0.222px;">Learn 3D In Blender</div>
<div class="t" style="left:545.64px;top:766px;font-size:18px;line-height:20px;color:#5a6169;letter-spacing:0.483px;">Tutorial for Beginners</div>
<div class="t" style="left:424.60px;top:749px;font-size:18px;line-height:20px;color:#5a6169;letter-spacing:0.552px;">C-<span style="letter-spacing:-1.45px">1</span>002</div>
<div class="t" style="left:809.85px;top:749px;font-size:18px;line-height:20px;color:#5a6169;letter-spacing:0.158px;"><span style="letter-spacing:-1.84px">1</span>8 Mar, 2026</div>
<div class="t" style="left:1040.13px;top:749px;font-size:18px;line-height:20px;color:#5a6169;letter-spacing:0.577px;">John Doe</div>
<div class="t" style="left:1227.23px;top:749px;font-size:18px;line-height:20px;color:#5a6169;letter-spacing:0.771px;">Jane Smith</div>
<div class="t" style="left:1421.82px;top:749px;font-size:18px;line-height:20px;color:#5a6169;letter-spacing:0.086px;">$20.00</div>
<div class="t" style="left:1639.52px;top:749px;font-size:18px;line-height:20px;color:#5a6169;letter-spacing:-0.148px;">$2.00</div>
<div class="a" style="left:375px;top:802px;width:1483px;height:1px;background:#ebecf3"></div>
<div class="t" style="left:554.96px;top:819px;font-size:18px;line-height:20px;color:#5a6169;letter-spacing:0.307px;">Learn WordPress</div>
<div class="t" style="left:545.64px;top:853px;font-size:18px;line-height:20px;color:#5a6169;letter-spacing:0.901px;">Theme Development</div>
<div class="t" style="left:546.00px;top:886px;font-size:18px;line-height:20px;color:#5a6169;letter-spacing:0.431px;">with WordPress</div>
<div class="t" style="left:424.60px;top:853px;font-size:18px;line-height:20px;color:#5a6169;letter-spacing:0.576px;">C-<span style="letter-spacing:-1.42px">1</span>003</div>
<div class="t" style="left:809.85px;top:853px;font-size:18px;line-height:20px;color:#5a6169;letter-spacing:0.158px;"><span style="letter-spacing:-1.84px">1</span>8 Mar, 2026</div>
<div class="t" style="left:1040.13px;top:853px;font-size:18px;line-height:20px;color:#5a6169;letter-spacing:0.577px;">John Doe</div>
<div class="t" style="left:1227.23px;top:853px;font-size:18px;line-height:20px;color:#5a6169;letter-spacing:0.771px;">Jane Smith</div>
<div class="t" style="left:1421.82px;top:853px;font-size:18px;line-height:20px;color:#5a6169;letter-spacing:0.086px;">$20.00</div>
<div class="t" style="left:1639.52px;top:853px;font-size:18px;line-height:20px;color:#5a6169;letter-spacing:-0.148px;">$2.00</div>
<div class="t" style="left:554.96px;top:939px;font-size:18px;line-height:20px;color:#5a6169;letter-spacing:0.222px;">Learn English in 30</div>
<div class="t" style="left:544.56px;top:972px;font-size:18px;line-height:20px;color:#5a6169;letter-spacing:0.910px;">Days</div>
<div class="t" style="left:424.60px;top:956px;font-size:18px;line-height:20px;color:#5a6169;letter-spacing:0.680px;">C-<span style="letter-spacing:-1.32px">1</span>004</div>
<div class="t" style="left:809.85px;top:956px;font-size:18px;line-height:20px;color:#5a6169;letter-spacing:0.158px;"><span style="letter-spacing:-1.84px">1</span>8 Mar, 2026</div>
<div class="t" style="left:1040.13px;top:956px;font-size:18px;line-height:20px;color:#5a6169;letter-spacing:0.577px;">John Doe</div>
<div class="t" style="left:1227.23px;top:956px;font-size:18px;line-height:20px;color:#5a6169;letter-spacing:0.771px;">Jane Smith</div>
<div class="t" style="left:1421.82px;top:956px;font-size:18px;line-height:20px;color:#5a6169;letter-spacing:0.086px;">$20.00</div>
<div class="t" style="left:1639.52px;top:956px;font-size:18px;line-height:20px;color:#5a6169;letter-spacing:-0.148px;">$2.00</div>
<div class="a" style="left:375px;top:1008px;width:1483px;height:1px;background:#ebecf3"></div>
<div class="t" style="left:554.96px;top:1027px;font-size:18px;line-height:20px;color:#5a6169;letter-spacing:0.606px;">Mastering in Laravel</div>
<div class="t" style="left:424.60px;top:1027px;font-size:18px;line-height:20px;color:#5a6169;letter-spacing:0.716px;">C-<span style="letter-spacing:-1.28px">1</span>005</div>
<div class="t" style="left:809.85px;top:1027px;font-size:18px;line-height:20px;color:#5a6169;letter-spacing:0.158px;"><span style="letter-spacing:-1.84px">1</span>8 Mar, 2026</div>
<div class="t" style="left:1040.13px;top:1027px;font-size:18px;line-height:20px;color:#5a6169;letter-spacing:0.577px;">John Doe</div>
<div class="t" style="left:1227.23px;top:1027px;font-size:18px;line-height:20px;color:#5a6169;letter-spacing:0.771px;">Jane Smith</div>
<div class="t" style="left:1421.82px;top:1027px;font-size:18px;line-height:20px;color:#5a6169;letter-spacing:0.086px;">$20.00</div>
<div class="t" style="left:1639.52px;top:1027px;font-size:18px;line-height:20px;color:#5a6169;letter-spacing:-0.148px;">$2.00</div>
<div class="a" style="left:375px;top:1064px;width:1483px;height:1px;background:#ebecf3"></div>
<div class="t" style="left:554.96px;top:1081px;font-size:18px;line-height:20px;color:#5a6169;letter-spacing:0.616px;">Mastering in Docker</div>
<div class="t" style="left:545.73px;top:1115px;font-size:18px;line-height:20px;color:#5a6169;letter-spacing:0.715px;">for Software</div>
<div class="t" style="left:544.56px;top:1148px;font-size:18px;line-height:20px;color:#5a6169;letter-spacing:0.766px;">Developers</div>
<div class="t" style="left:424.60px;top:1115px;font-size:18px;line-height:20px;color:#5a6169;letter-spacing:0.716px;">C-<span style="letter-spacing:-1.28px">1</span>006</div>
<div class="t" style="left:809.85px;top:1115px;font-size:18px;line-height:20px;color:#5a6169;letter-spacing:0.158px;"><span style="letter-spacing:-1.84px">1</span>8 Mar, 2026</div>
<div class="t" style="left:1040.13px;top:1115px;font-size:18px;line-height:20px;color:#5a6169;letter-spacing:0.577px;">John Doe</div>
<div class="t" style="left:1227.23px;top:1115px;font-size:18px;line-height:20px;color:#5a6169;letter-spacing:0.771px;">Jane Smith</div>
<div class="t" style="left:1421.82px;top:1115px;font-size:18px;line-height:20px;color:#5a6169;letter-spacing:0.086px;">$20.00</div>
<div class="t" style="left:1639.52px;top:1115px;font-size:18px;line-height:20px;color:#5a6169;letter-spacing:-0.148px;">$2.00</div>
<div class="a" style="left:375px;top:1184px;width:1483px;height:1px;background:#ebecf3"></div>
<div class="t" style="left:555.50px;top:1202px;font-size:18px;line-height:20px;color:#5a6169;letter-spacing:0.663px;">Graphics Design for</div>
<div class="t" style="left:544.56px;top:1235px;font-size:18px;line-height:20px;color:#5a6169;letter-spacing:0.672px;">Beginners</div>
<div class="t" style="left:424.60px;top:1219px;font-size:18px;line-height:20px;color:#5a6169;letter-spacing:-0.082px;">C-<span style="letter-spacing:-2.08px">1</span>0<span style="letter-spacing:-2.08px">1</span>0</div>
<div class="t" style="left:809.85px;top:1219px;font-size:18px;line-height:20px;color:#5a6169;letter-spacing:0.158px;"><span style="letter-spacing:-1.84px">1</span>8 Mar, 2026</div>
<div class="t" style="left:1040.13px;top:1219px;font-size:18px;line-height:20px;color:#5a6169;letter-spacing:0.577px;">John Doe</div>
<div class="t" style="left:1227.23px;top:1219px;font-size:18px;line-height:20px;color:#5a6169;letter-spacing:0.771px;">Jane Smith</div>
<div class="t" style="left:1421.82px;top:1219px;font-size:18px;line-height:20px;color:#5a6169;letter-spacing:-0.377px;">$<span style="letter-spacing:-2.38px">1</span>30.00</div>
<div class="t" style="left:1639.52px;top:1219px;font-size:18px;line-height:20px;color:#5a6169;letter-spacing:0.146px;">$52.80</div>
<div class="a" style="left:375px;top:1272px;width:1483px;height:1px;background:#ebecf3"></div>
<div class="t" style="left:555.50px;top:1290px;font-size:18px;line-height:20px;color:#5a6169;letter-spacing:-0.011px;">Course 1</div>
<div class="t" style="left:424.60px;top:1290px;font-size:18px;line-height:20px;color:#5a6169;letter-spacing:-0.024px;">C-<span style="letter-spacing:-2.02px">1</span>0<span style="letter-spacing:-2.02px">1</span>6</div>
<div class="t" style="left:809.85px;top:1290px;font-size:18px;line-height:20px;color:#5a6169;letter-spacing:0.158px;"><span style="letter-spacing:-1.84px">1</span>8 Mar, 2026</div>
<div class="t" style="left:1038.96px;top:1290px;font-size:18px;line-height:20px;color:#5a6169;letter-spacing:0.575px;">Bob Williams</div>
<div class="t" style="left:1226.06px;top:1290px;font-size:18px;line-height:20px;color:#5a6169;letter-spacing:0.467px;">Mason Lee</div>
<div class="t" style="left:1421.82px;top:1290px;font-size:18px;line-height:20px;color:#5a6169;letter-spacing:-0.243px;">$<span style="letter-spacing:-2.24px">1</span>85.00</div>
<div class="t" style="left:1639.52px;top:1290px;font-size:18px;line-height:20px;color:#5a6169;letter-spacing:-1.093px;">$<span style="letter-spacing:-3.09px">1</span><span style="letter-spacing:-3.09px">1</span><span style="letter-spacing:-3.09px">1</span>.00</div>
<div class="a" style="left:375px;top:1326px;width:1483px;height:1px;background:#ebecf3"></div>
<div class="t" style="left:555.50px;top:1344px;font-size:18px;line-height:20px;color:#5a6169;letter-spacing:-0.011px;">Course 1</div>
<div class="t" style="left:424.60px;top:1344px;font-size:18px;line-height:20px;color:#5a6169;letter-spacing:-0.064px;">C-<span style="letter-spacing:-2.06px">1</span>0<span style="letter-spacing:-2.06px">1</span>8</div>
<div class="t" style="left:809.85px;top:1344px;font-size:18px;line-height:20px;color:#5a6169;letter-spacing:0.158px;"><span style="letter-spacing:-1.84px">1</span>9 Mar, 2026</div>
<div class="t" style="left:1038.96px;top:1344px;font-size:18px;line-height:20px;color:#5a6169;letter-spacing:0.575px;">Bob Williams</div>
<div class="t" style="left:1226.78px;top:1344px;font-size:18px;line-height:20px;color:#5a6169;letter-spacing:1.563px;">abrar</div>
<div class="t" style="left:1421.82px;top:1344px;font-size:18px;line-height:20px;color:#5a6169;letter-spacing:-0.243px;">$<span style="letter-spacing:-2.24px">1</span>85.00</div>
<div class="t" style="left:1639.52px;top:1344px;font-size:18px;line-height:20px;color:#5a6169;letter-spacing:-1.093px;">$<span style="letter-spacing:-3.09px">1</span><span style="letter-spacing:-3.09px">1</span><span style="letter-spacing:-3.09px">1</span>.00</div>
<div class="a" style="left:375px;top:1380px;width:1483px;height:1px;background:#ebecf3"></div>
<div class="t" style="left:375.09px;top:1452px;font-size:17px;line-height:19px;color:#3f51a0;letter-spacing:0.309px;">showing 1 to 8 of 8 entries</div>
<div class="a" style="left:1713px;top:1444px;width:40px;height:40px;border-radius:20px;background:#f5f5f8"></div>
<div class="a" style="left:1818px;top:1444px;width:40px;height:40px;border-radius:20px;background:#f5f5f8"></div>
<div class="a" style="left:1765px;top:1445px;width:40px;height:40px;border-radius:20px;background:#5570e4;box-shadow:0 5px 14px rgba(130,90,250,0.28)"></div>
<svg class="a" style="left:1780px;top:1456px" width="10" height="16"><path d="M3 4.6 L5.9 2.5 V14" stroke="#fff" stroke-width="1.8" fill="none" stroke-linejoin="round"/></svg>
<svg class="a" style="left:1724px;top:1455px" width="18" height="18"><path d="M15.4 8.7 H2.5 M8.4 1.8 L2 8.7 L8.4 15.5" stroke="#3d444e" stroke-width="1.5" fill="none"/></svg>
<svg class="a" style="left:1829px;top:1455px" width="18" height="18"><path d="M2.6 8.7 H15.5 M9.6 1.8 L16 8.7 L9.6 15.5" stroke="#3d444e" stroke-width="1.5" fill="none"/></svg>
<div class="t" style="left:841.60px;top:1560px;font-size:18px;line-height:20px;color:#656b74;letter-spacing:0.140px;">Copyright © 2026 LevelUp. All rights reserved | Made By UXSEVEN</div>
</body></html>
